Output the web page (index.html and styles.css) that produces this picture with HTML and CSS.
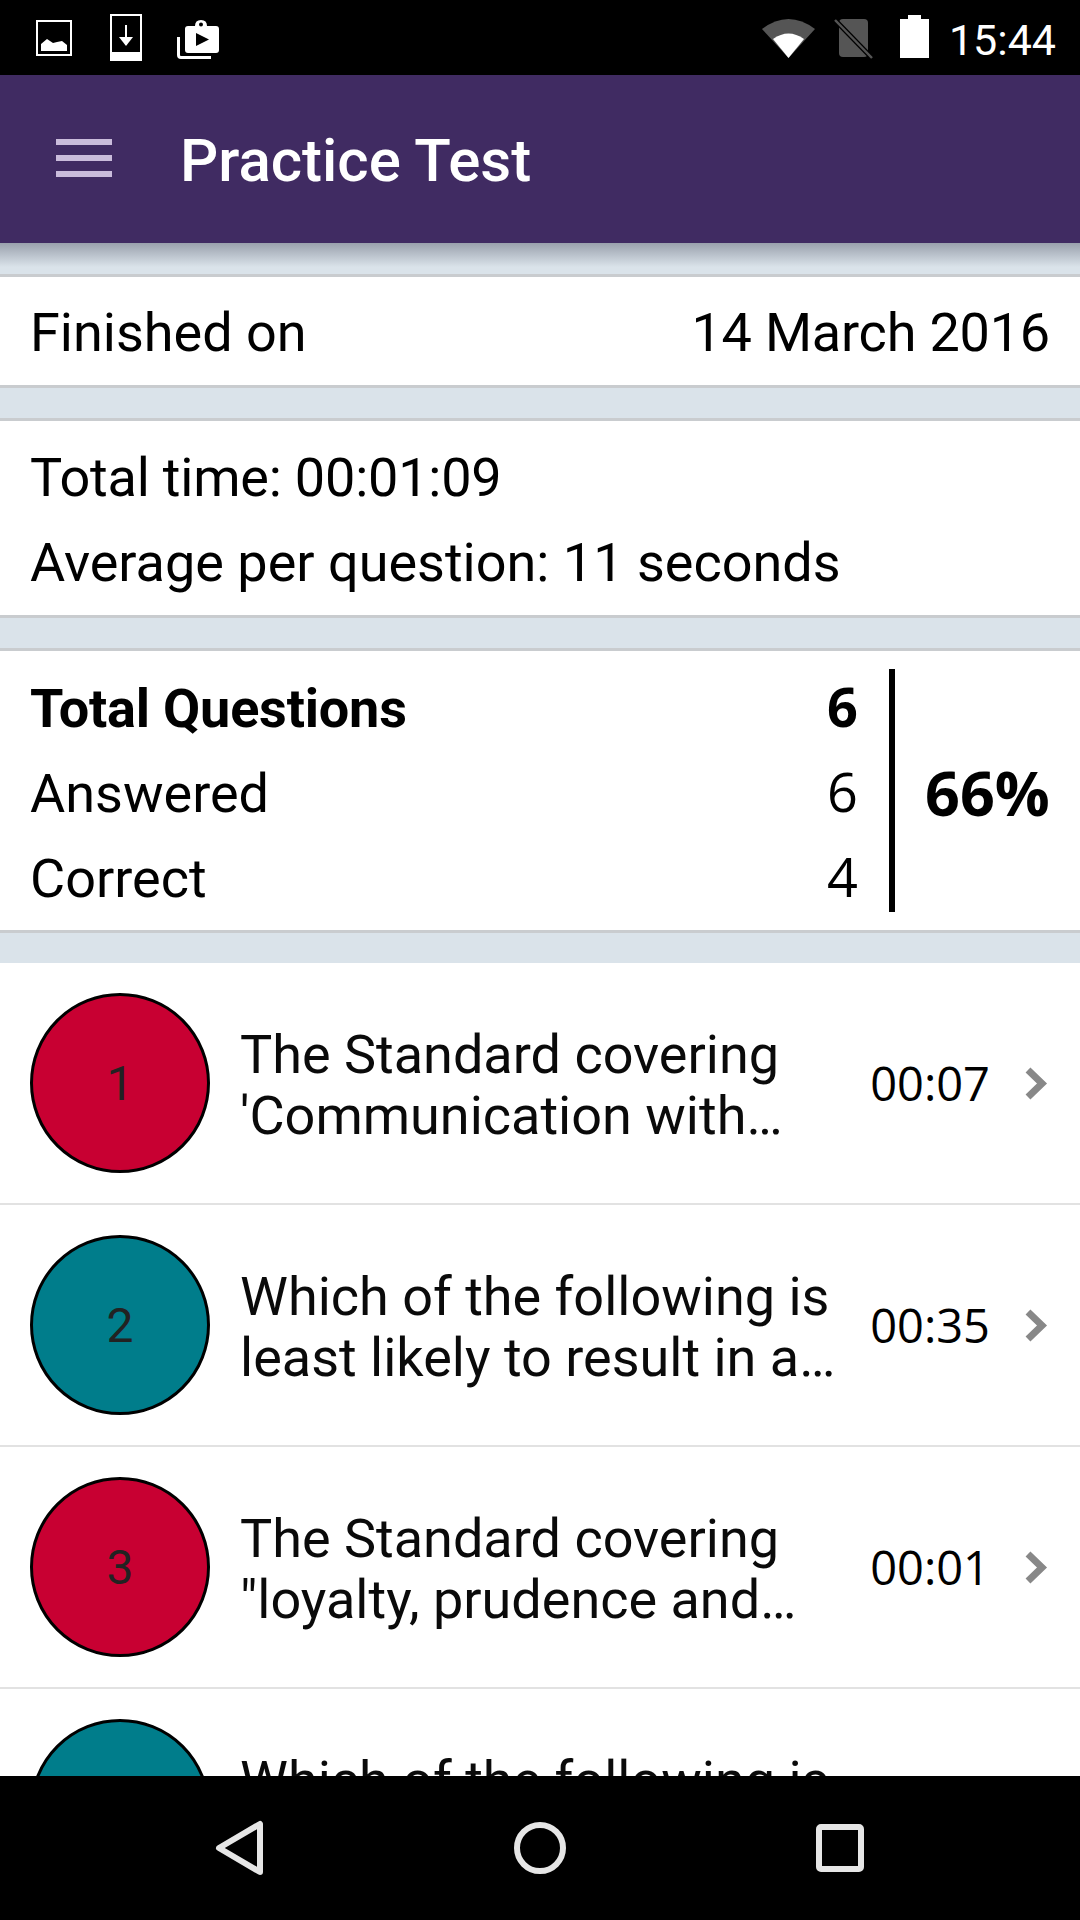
FILE: index.html
```html
<!DOCTYPE html>
<html lang="en">
<head>
<meta charset="utf-8">
<title>Practice Test</title>
<link rel="stylesheet" href="styles.css">
</head>
<body>
<div class="app">
  <header class="status">
    <div class="status-left">
      <svg class="ico-image" viewBox="0 0 36 36"><rect x="1" y="1" width="34" height="34" fill="none" stroke="#fff" stroke-width="2"/><path d="M5 31V24l6-5 6 4 4-1 5-1 5 4v6z" fill="#fff"/></svg>
      <svg class="ico-dl" viewBox="0 0 32 47"><path d="M0 0h32v47H0zM2 2v36h28V2z" fill="#fff" fill-rule="evenodd"/><path d="M16 11v20" stroke="#fff" stroke-width="2"/><path d="M9 23h14l-7 9z" fill="#fff"/></svg>
      <svg class="ico-store" viewBox="0 0 42 40"><path d="M1.500 18v18q0 2.500 2.500 2.500h30" fill="none" stroke="#fff" stroke-width="3"/><path d="M11 7h7q0-6 6-6t6 6h9q3 0 3 3v21q0 3-3 3H11q-3 0-3-3V10q0-3 3-3z" fill="#fff"/><path d="M19 14v13l13-6.500z" fill="#000"/><circle cx="24" cy="5.500" r="2" fill="#000"/></svg>
    </div>
    <div class="status-right">
      <svg class="ico-wifi" viewBox="0 0 53 41"><path d="M26.500 41 0 12Q26.500-8 53 12z" fill="#555"/><path d="M26.500 41 11 22Q26.500 11 42 22z" fill="#fff"/></svg>
      <svg class="ico-sim" viewBox="0 0 39 41"><path d="M9 1h21q4 0 4 4v30q0 4-4 4H9q-4 0-4-4V5q0-4 4-4z" fill="#555"/><path d="M1 2 38 40" stroke="#000" stroke-width="5"/><path d="M1 2 38 40" stroke="#555" stroke-width="2.500"/></svg>
      <svg class="ico-batt" viewBox="0 0 29 43"><path d="M8 0h13v4h8v39H0V4h8z" fill="#fff"/></svg>
      <span class="clock">15:44</span>
    </div>
  </header>

  <div class="toolbar">
    <div class="menu"><span></span><span></span><span></span></div>
    <h1 class="title">Practice Test</h1>
  </div>

  <main class="content">
    <section class="card finished">
      <span>Finished on</span>
      <span class="tight">14 March 2016</span>
    </section>
    <section class="card times">
      <div class="line tight">Total time: 00:01:09</div>
      <div class="line">Average per question: 11 seconds</div>
    </section>
    <section class="card stats">
      <div class="stat-rows">
        <div class="stat strong"><span class="tight">Total Questions</span><span class="num">6</span></div>
        <div class="stat"><span>Answered</span><span class="num">6</span></div>
        <div class="stat"><span>Correct</span><span class="num">4</span></div>
      </div>
      <div class="divider"></div>
      <div class="percent">66%</div>
    </section>

    <ul class="list">
      <li class="row">
        <div class="badge wrong">1</div>
        <div class="q"><div>The Standard covering</div><div>'Communication with…</div></div>
        <div class="time">00:07</div>
        <svg class="chev" viewBox="0 0 24 35"><path d="M4 4 18 17.500 4 31" fill="none" stroke="#888" stroke-width="7"/></svg>
      </li>
      <li class="row">
        <div class="badge right">2</div>
        <div class="q"><div>Which of the following is</div><div>least likely to result in a…</div></div>
        <div class="time">00:35</div>
        <svg class="chev" viewBox="0 0 24 35"><path d="M4 4 18 17.500 4 31" fill="none" stroke="#888" stroke-width="7"/></svg>
      </li>
      <li class="row">
        <div class="badge wrong">3</div>
        <div class="q"><div>The Standard covering</div><div>"loyalty, prudence and…</div></div>
        <div class="time">00:01</div>
        <svg class="chev" viewBox="0 0 24 35"><path d="M4 4 18 17.500 4 31" fill="none" stroke="#888" stroke-width="7"/></svg>
      </li>
      <li class="row">
        <div class="badge right">4</div>
        <div class="q"><div>Which of the following is</div><div>&nbsp;</div></div>
      </li>
    </ul>
  </main>

  <nav class="navbar">
    <svg class="nav-back" viewBox="0 0 49 56"><path d="M45 4v48L4 28z" fill="none" stroke="#e6e6e6" stroke-width="6" stroke-linejoin="round"/></svg>
    <svg class="nav-home" viewBox="0 0 52 52"><circle cx="26" cy="26" r="23" fill="none" stroke="#e6e6e6" stroke-width="6"/></svg>
    <svg class="nav-recent" viewBox="0 0 48 48"><rect x="3" y="3" width="42" height="42" rx="2" fill="none" stroke="#e6e6e6" stroke-width="6"/></svg>
  </nav>
</div>
</body>
</html>
```
FILE: styles.css
```css
* { box-sizing: border-box; margin: 0; padding: 0; }
html, body { width: 1080px; height: 1920px; overflow: hidden; }
body { font-family: Roboto, "Liberation Sans", sans-serif; color: #000; background: #000; }
.app { width: 1080px; height: 1920px; display: flex; flex-direction: column; overflow: hidden; }

.status { flex: 0 0 75px; background: #000; display: flex; justify-content: space-between; align-items: flex-start; padding: 14px 24px 0 36px; }
.status-left { display: flex; align-items: flex-start; }
.ico-image { width: 36px; height: 36px; margin-top: 6px; }
.ico-dl { width: 32px; height: 47px; margin-left: 38px; }
.ico-store { width: 42px; height: 40px; margin-left: 35px; margin-top: 5px; }
.status-right { display: flex; align-items: flex-start; }
.ico-wifi { width: 53px; height: 41px; margin-top: 3px; }
.ico-sim { width: 39px; height: 41px; margin-top: 4px; margin-left: 19px; }
.ico-batt { width: 29px; height: 43px; margin-top: 1px; margin-left: 27px; }
.clock { color: #fff; font-size: 43px; line-height: 48px; margin-left: 20px; margin-top: 2px; }

.toolbar { flex: 0 0 168px; background: #402b62; display: flex; align-items: center; padding-left: 56px; position: relative; z-index: 1; }
.menu { width: 56px; display: flex; flex-direction: column; gap: 10px; margin-top: -2px; }
.menu span { display: block; height: 6px; background: #cabcdb; }
.title { font-size: 60px; font-weight: 500; color: #fff; margin-left: 68px; line-height: 66px; margin-top: 4px; }

.content { flex: 1 1 auto; min-height: 0; overflow: hidden; background: #dae3ea; position: relative; padding-top: 31px; }
.content::before { content: ""; position: absolute; left: 0; right: 0; top: 0; height: 24px; background: linear-gradient(#9aa1ad, #dae3ea); }
.card { background: #fff; border-top: 3px solid #c9cccf; border-bottom: 3px solid #c9cccf; padding: 0 30px; position: relative; font-size: 54px; margin-bottom: 30px; }
.tight { letter-spacing: -0.2px; }
.finished { display: flex; justify-content: space-between; align-items: center; height: 114px; padding-top: 3px; }
.times { height: 200px; padding-top: 14px; }
.line { height: 85px; line-height: 85px; }
.stats { height: 285px; display: flex; padding-top: 15px; }
.stat-rows { flex: 1 1 auto; padding-right: 31px; }
.stat { display: flex; justify-content: space-between; height: 85px; line-height: 85px; }
.stat.strong { font-weight: 700; }
.divider { flex: 0 0 6px; height: 243px; margin-top: 3px; background: #000; }
.num { font-family: "Open Sans", sans-serif; margin-top: -2px; }
.percent { flex: 0 0 auto; width: 125px; margin-left: 30px; margin-top: 5px; height: 243px; line-height: 243px; font-family: "Open Sans", sans-serif; font-weight: 700; font-size: 61px; white-space: nowrap; }

.list { list-style: none; background: #fff; }
.row { height: 242px; display: flex; align-items: center; padding: 0 30px; border-bottom: 2px solid #e2e2e2; }
.badge { flex: 0 0 180px; height: 180px; border-radius: 50%; border: 3px solid #000; display: flex; align-items: center; justify-content: center; font-size: 48px; color: #222; }
.badge.wrong { background: #c80032; }
.badge.right { background: #007d8b; }
.q { flex: 1 1 auto; margin-left: 30px; margin-top: 3px; font-size: 54px; line-height: 61px; white-space: nowrap; color: #0a0a0a; }
.time { flex: 0 0 auto; font-family: "Open Sans", sans-serif; font-size: 47px; }
.chev { flex: 0 0 24px; width: 24px; height: 35px; margin-left: 34px; margin-right: 2px; }

.navbar { flex: 0 0 144px; background: #000; position: relative; display: flex; align-items: center; z-index: 2; padding-left: 215px; }
.nav-back { width: 49px; height: 56px; }
.nav-home { width: 52px; height: 52px; margin-left: 250px; }
.nav-recent { width: 48px; height: 48px; margin-left: 250px; }
```
